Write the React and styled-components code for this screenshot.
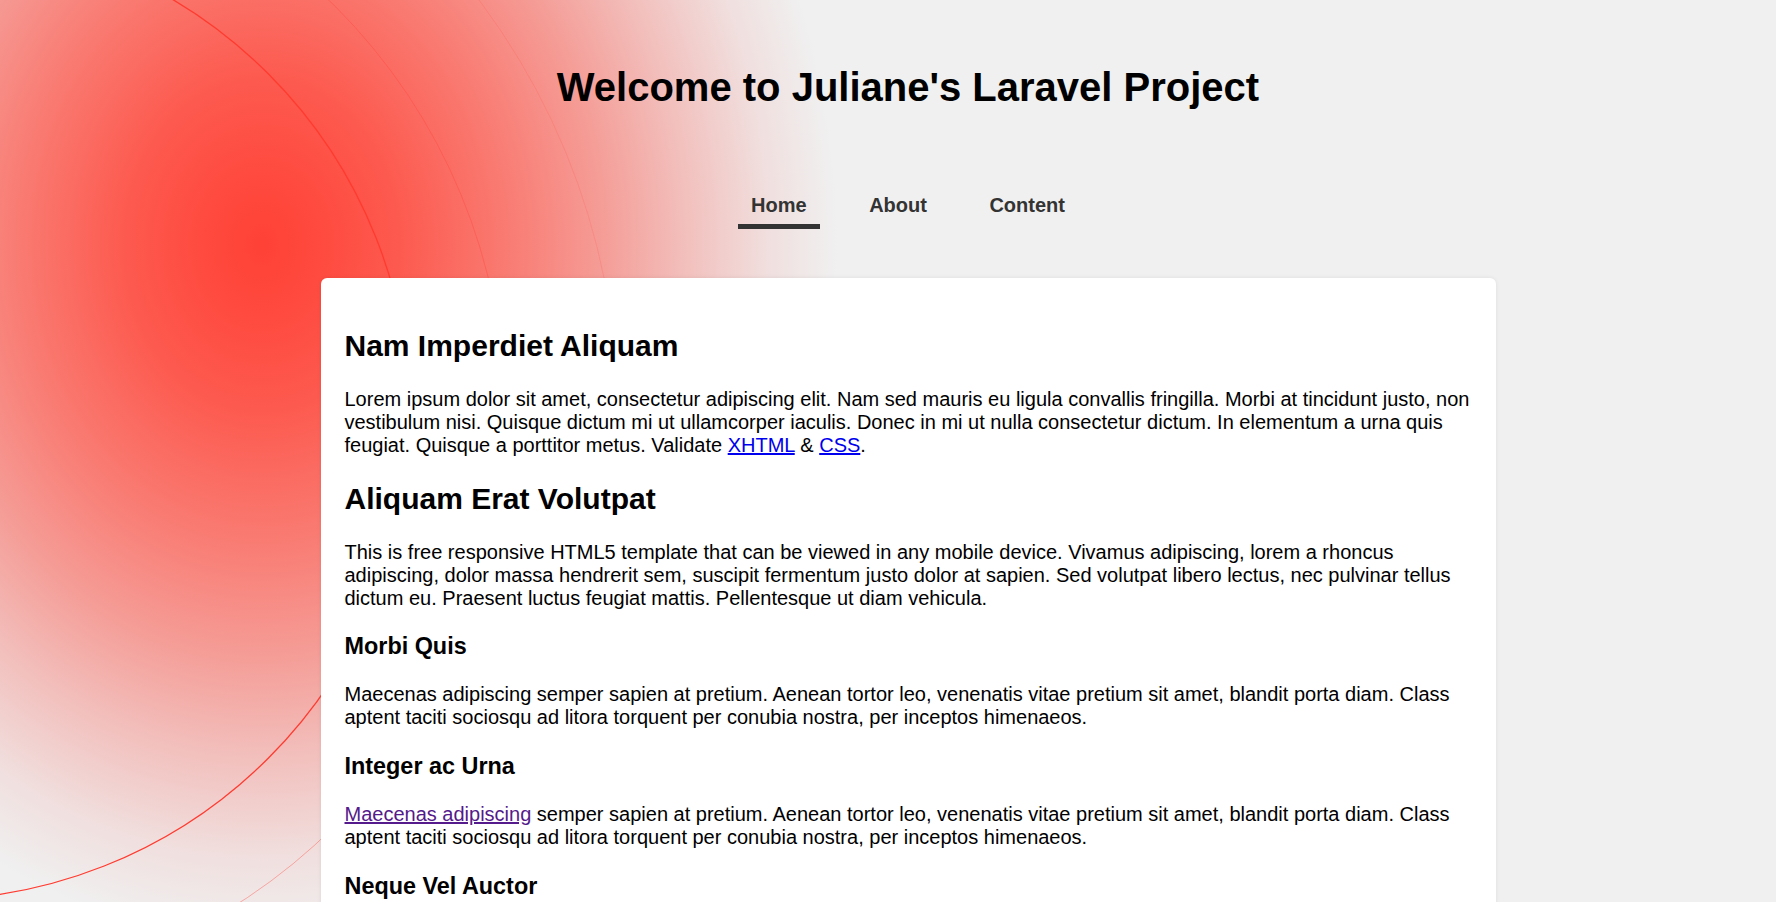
import styled, { createGlobalStyle } from "styled-components";

const GlobalStyle = createGlobalStyle`
  html, body {
    margin: 0;
    height: 100%;
    overflow: hidden;
  }
  body {
    font-family: "Liberation Sans", Arial, sans-serif;
    font-size: 20px;
    color: #000;
    background: #f0f0f0;
  }
`;

const Page = styled.div`
  position: relative;
  min-height: 100vh;
  padding-left: 40px;
  box-sizing: border-box;
  background: radial-gradient(
    ellipse 575px 695px at 262px 245px,
    #ff4136 0,
    #ff4a3f 10%,
    #fd5a4f 24%,
    #f97a71 42%,
    #f59c96 59%,
    #f2c0bd 74%,
    #f0dfde 88%,
    #f0f0f0 100%
  );
`;

const Rings = styled.svg`
  position: absolute;
  top: 0;
  left: 0;
  width: 100%;
  height: 100%;
  pointer-events: none;
  z-index: 0;
`;

const Header = styled.header`
  position: relative;
  z-index: 1;
  padding-top: 65px;
  text-align: center;
`;

const Title = styled.h1`
  margin: 0;
  font-size: 40px;
  font-weight: bold;
`;

const Nav = styled.nav`
  display: flex;
  justify-content: center;
  gap: 35.5px;
  margin-top: 76.5px;
`;

const NavLink = styled.a`
  padding: 7px 13.5px 7.5px;
  border-bottom: 5px solid ${(p) => (p.$active ? "#333" : "transparent")};
  color: #333;
  font-weight: bold;
  text-decoration: none;
`;

const Card = styled.main`
  position: relative;
  z-index: 1;
  width: 1175px;
  margin: 49px auto 0;
  padding: 26px 24px 24px;
  box-sizing: border-box;
  background: #fff;
  border-radius: 6px;
  box-shadow: 0 0 4px rgba(0, 0, 0, 0.08);

  h2 {
    font-size: 30px;
    margin: 0.83em 0;
  }
  h3 {
    font-size: 1.17em;
    margin: 1em 0;
  }
  p {
    margin: 1em 0;
  }
  a {
    color: #0000ee;
  }
`;

const Visited = styled.a`
  && {
    color: #551a8b;
  }
`;

const filler =
  "Maecenas adipiscing semper sapien at pretium. Aenean tortor leo, venenatis vitae pretium sit amet, blandit porta diam. Class aptent taciti sociosqu ad litora torquent per conubia nostra, per inceptos himenaeos.";

export default function App() {
  return (
    <>
      <GlobalStyle />
      <Page>
        <Rings>
          <circle cx="-74" cy="416" r="484" fill="none" stroke="#ff3b30" strokeWidth="1.3" />
          <circle cx="-74" cy="416" r="579" fill="none" stroke="rgba(255,70,60,0.4)" strokeWidth="1" />
          <circle cx="-74" cy="416" r="692" fill="none" stroke="rgba(255,70,60,0.18)" strokeWidth="1" />
        </Rings>
        <Header>
          <Title>Welcome to Juliane's Laravel Project</Title>
          <Nav>
            <NavLink href="#" $active>Home</NavLink>
            <NavLink href="#">About</NavLink>
            <NavLink href="#">Content</NavLink>
          </Nav>
        </Header>
        <Card>
          <h2>Nam Imperdiet Aliquam</h2>
          <p>
            Lorem ipsum dolor sit amet, consectetur adipiscing elit. Nam sed mauris eu ligula
            convallis fringilla. Morbi at tincidunt justo, non vestibulum nisi. Quisque dictum mi ut
            ullamcorper iaculis. Donec in mi ut nulla consectetur dictum. In elementum a urna quis
            feugiat. Quisque a porttitor metus. Validate <a href="#">XHTML</a> &amp;{" "}
            <a href="#">CSS</a>.
          </p>
          <h2>Aliquam Erat Volutpat</h2>
          <p>
            This is free responsive HTML5 template that can be viewed in any mobile device. Vivamus
            adipiscing, lorem a rhoncus adipiscing, dolor massa hendrerit sem, suscipit fermentum
            justo dolor at sapien. Sed volutpat libero lectus, nec pulvinar tellus dictum eu.
            Praesent luctus feugiat mattis. Pellentesque ut diam vehicula.
          </p>
          <h3>Morbi Quis</h3>
          <p>{filler}</p>
          <h3>Integer ac Urna</h3>
          <p>
            <Visited href="#">Maecenas adipiscing</Visited> semper sapien at pretium. Aenean tortor
            leo, venenatis vitae pretium sit amet, blandit porta diam. Class aptent taciti sociosqu
            ad litora torquent per conubia nostra, per inceptos himenaeos.
          </p>
          <h3>Neque Vel Auctor</h3>
          <p>{filler}</p>
        </Card>
      </Page>
    </>
  );
}
